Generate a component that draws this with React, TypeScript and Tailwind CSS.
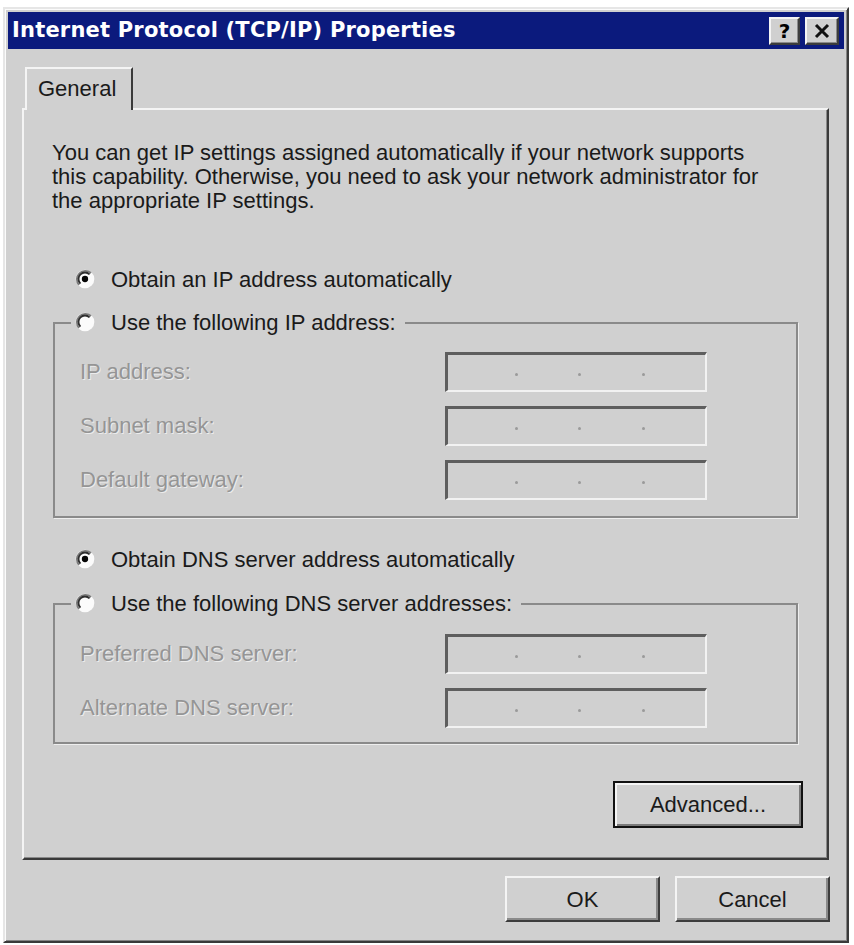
import type { ReactNode } from "react"

const body = { fontFamily: '"Liberation Sans", Arial, sans-serif' }
const title = { fontFamily: '"DejaVu Sans", Verdana, sans-serif' }

function Radio({ checked }: { checked?: boolean }) {
  return (
    <svg width="20" height="20" viewBox="0 0 12 12" className="-mt-[3px] shrink-0">
      <circle cx="6" cy="6" r="5.6" fill="#fbfbfb" />
      <path d="M9.6 2.4 A5.1 5.1 0 0 0 2.4 9.6" stroke="#7a7a7a" strokeWidth="1.1" fill="none" />
      <path d="M8.76 3.24 A3.9 3.9 0 0 0 3.24 8.76" stroke="#2e2e2e" strokeWidth="1.1" fill="none" />
      {checked && <circle cx="6" cy="6" r="1.9" fill="#050505" />}
    </svg>
  )
}

function RadioRow({ label, checked }: { label: string; checked?: boolean }) {
  return (
    <div className="flex h-[24px] items-center gap-[16px]">
      <Radio checked={checked} />
      <span className="text-[22px] leading-[24px] text-[#1a1a1a]">{label}</span>
    </div>
  )
}

function Dot() {
  return <div className="h-[3px] w-[3px] rounded-full bg-[#9a9a9a]" />
}

function IpField() {
  return (
    <div className="flex h-[40px] w-[262px] items-center border-t-[3px] border-l-[3px] border-b-2 border-r-2 border-t-[#5e5e5e] border-l-[#5e5e5e] border-b-[#f2f2f2] border-r-[#f2f2f2] bg-[#d0d0d0] pt-[3px]">
      <div className="w-[67px]" />
      <Dot />
      <div className="w-[60px]" />
      <Dot />
      <div className="w-[61px]" />
      <Dot />
    </div>
  )
}

function FieldRow({ label }: { label: string }) {
  return (
    <div className="flex items-center">
      <span className="w-[390px] pl-[25px] text-[22px] leading-[24px] text-[#959595] [text-shadow:1px_1px_0_#ececec]">
        {label}
      </span>
      <IpField />
    </div>
  )
}

function Group({ legend, children }: { legend: string; children: ReactNode }) {
  return (
    <div className="mx-[29px] border-2 border-[#8a8a8a] shadow-[1px_1px_0_#eeeeee]">
      <div className="-mt-[13px] ml-[16px] w-fit bg-[#d0d0d0] pl-[4px] pr-[9px]">
        <RadioRow label={legend} />
      </div>
      {children}
    </div>
  )
}

function WinButton({ label, isDefault }: { label: string; isDefault?: boolean }) {
  if (isDefault) {
    return (
      <div className="flex h-[47px] w-[190px] items-center justify-center border-2 border-[#111] bg-[#d0d0d0] text-[22px] text-[#1a1a1a] shadow-[inset_2px_2px_0_#f4f4f4,inset_-2px_-2px_0_#7a7a7a]">
        {label}
      </div>
    )
  }
  return (
    <div className="flex h-[46px] w-[155px] items-center justify-center border-2 border-t-[#f4f4f4] border-l-[#f4f4f4] border-r-[#3c3c3c] border-b-[#3c3c3c] bg-[#d0d0d0] text-[22px] text-[#1a1a1a] shadow-[inset_-2px_-2px_0_#8a8a8a]">
      {label}
    </div>
  )
}

function CaptionButton({ children, w }: { children: ReactNode; w: string }) {
  return (
    <div
      className={`flex h-[28px] ${w} items-center justify-center border-2 border-t-[#f4f4f4] border-l-[#f4f4f4] border-r-[#3c3c3c] border-b-[#3c3c3c] bg-[#d0d0d0] shadow-[inset_-1px_-1px_0_#8a8a8a]`}
    >
      {children}
    </div>
  )
}

export default function App() {
  return (
    <div className="h-[945px] w-[854px] bg-white pl-[3px] pt-[7px]" style={body}>
      <div className="flex h-[936px] w-[846px] flex-col border-2 border-t-[#e6e6e6] border-l-[#e6e6e6] border-r-[#3a3a3a] border-b-[#3a3a3a] bg-[#d0d0d0] p-[3px] shadow-[inset_1px_1px_0_#fbfbfb,inset_-1px_-1px_0_#858585]">
        {/* Title bar */}
        <div className="flex h-[37px] shrink-0 items-center justify-between bg-[#0b1a7d] pl-[4px] pr-[5px]">
          <span className="text-[21px] font-bold tracking-[0.2px] text-white" style={title}>
            Internet Protocol (TCP/IP) Properties
          </span>
          <div className="flex gap-[5px]">
            <CaptionButton w="w-[31px]">
              <span className="text-[20px] font-bold leading-none text-black" style={title}>?</span>
            </CaptionButton>
            <CaptionButton w="w-[34px]">
              <svg width="18" height="16" viewBox="0 0 18 16">
                <path d="M3 2 L15 14 M15 2 L3 14" stroke="#111" strokeWidth="3" />
              </svg>
            </CaptionButton>
          </div>
        </div>

        {/* Tabs + panel */}
        <div className="mt-[18px] ml-[14px] w-[807px]">
          <div className="relative z-10 -mb-[2px] ml-[3px] flex h-[43px] w-[108px] items-center border-t-2 border-l-2 border-r-2 border-t-[#f4f4f4] border-l-[#f4f4f4] border-r-[#3a3a3a] bg-[#d0d0d0] pb-[2px] pl-[11px] text-[22px] text-[#1a1a1a]">
            General
          </div>
          <div className="flex h-[752px] flex-col border-2 border-t-[#f4f4f4] border-l-[#f4f4f4] border-r-[#3a3a3a] border-b-[#3a3a3a] shadow-[inset_-1px_-1px_0_#8a8a8a]">
            <p className="mt-[31px] pl-[28px] text-[22px] leading-[24px] text-[#1a1a1a]">
              You can get IP settings assigned automatically if your network supports
              <br />
              this capability. Otherwise, you need to ask your network administrator for
              <br />
              the appropriate IP settings.
            </p>

            <div className="mt-[55px] pl-[51px]">
              <RadioRow label="Obtain an IP address automatically" checked />
            </div>

            <div className="mt-[30px]">
              <Group legend="Use the following IP address:">
                <div className="mt-[17px] flex flex-col gap-[14px] pb-[16px]">
                  <FieldRow label="IP address:" />
                  <FieldRow label="Subnet mask:" />
                  <FieldRow label="Default gateway:" />
                </div>
              </Group>
            </div>

            <div className="mt-[30px] pl-[51px]">
              <RadioRow label="Obtain DNS server address automatically" checked />
            </div>

            <div className="mt-[31px]">
              <Group legend="Use the following DNS server addresses:">
                <div className="mt-[18px] flex flex-col gap-[14px] pb-[14px]">
                  <FieldRow label="Preferred DNS server:" />
                  <FieldRow label="Alternate DNS server:" />
                </div>
              </Group>
            </div>

            <div className="mt-[37px] flex justify-end pr-[24px]">
              <WinButton label="Advanced..." isDefault />
            </div>
          </div>
        </div>

        {/* Bottom buttons */}
        <div className="mt-[16px] flex justify-end gap-[15px] pr-[14px]">
          <WinButton label="OK" />
          <WinButton label="Cancel" />
        </div>
      </div>
    </div>
  )
}
